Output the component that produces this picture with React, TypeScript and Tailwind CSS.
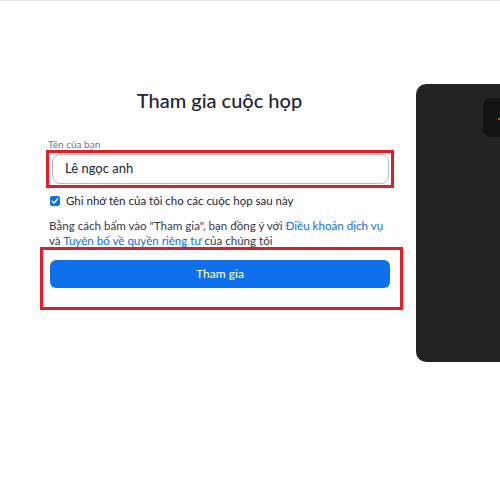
import React from 'react'

const App: React.FC = () => {
  return (
    <div className="w-[500px] h-[478px] bg-white border-t border-[#ebebeb] overflow-hidden font-['Lato',sans-serif]">
      <div className="flex pt-[83px]">
        {/* form column */}
        <div className="ml-[49px] w-[341px] shrink-0 pt-[4px]">
          <h1 className="text-center text-[20px] leading-[24px] font-medium text-[#232333]">
            Tham gia cuộc họp
          </h1>

          <label className="block mt-[27px] ml-[-1px] text-[10px] leading-[11px] text-[#747487]">
            Tên của bạn
          </label>
          <div className="ml-[-3px] w-[348px] border-[3px] border-[#e31d25] pl-[3px] pr-[2px] py-[1px]">
            <div className="h-[30px] rounded-[8px] border border-[#b9b9c3] flex items-center pl-[12px] text-[13px] text-[#232333]">
              Lê ngọc anh
            </div>
          </div>

          <div className="flex items-center mt-[6px] h-[14px] ml-[1px]">
            <span className="w-[10px] h-[10px] rounded-[2px] bg-[#0e71eb] flex items-center justify-center">
              <svg width="8" height="8" viewBox="0 0 8 8" fill="none">
                <path d="M1.2 4.2 3.1 6 6.8 1.8" stroke="white" strokeWidth="1.4" strokeLinecap="round" strokeLinejoin="round" />
              </svg>
            </span>
            <span className="ml-[6px] text-[11.5px] text-[#232333]">
              Ghi nhớ tên của tôi cho các cuộc họp sau này
            </span>
          </div>

          <p className="mt-[10px] text-[11.6px] leading-[15px] text-[#39394d] whitespace-nowrap">
            Bằng cách bấm vào "Tham gia", bạn đồng ý với{' '}
            <span className="text-[#0e71eb]">Điều khoản dịch vụ</span>
            <br />
            và <span className="text-[#0e71eb]">Tuyên bố về quyền riêng tư</span> của chúng tôi
          </p>

          <div className="mt-[-1px] ml-[-9px] w-[363px] border-[3px] border-[#e31d25] pl-[7px] pr-[10px] pt-[10px] pb-[19px]">
            <button className="w-full h-[28px] rounded-[6px] bg-[#0e71eb] text-white text-[12px] font-medium">
              Tham gia
            </button>
          </div>
        </div>

        {/* video preview panel */}
        <div className="ml-[26px] w-[120px] h-[278px] shrink-0 rounded-[10px] bg-[#232323] pt-[14px] pl-[67px]">
          <div className="w-[40px] h-[39px] rounded-[8px] bg-[#131313] flex items-center">
            <span className="ml-[15px] mt-[3px] w-[2px] h-[2px] bg-[#8a5a3c]" />
          </div>
        </div>
      </div>
    </div>
  )
}

export default App
